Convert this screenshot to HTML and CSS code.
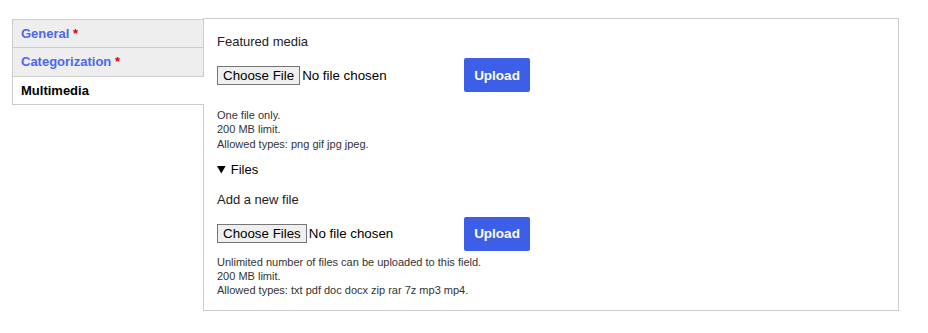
FILE: index.html
```html
<!DOCTYPE html>
<html lang="en">
<head>
  <meta charset="UTF-8">
  <meta name="viewport" content="width=device-width, initial-scale=1.0">
  <title>Multimedia</title>
  <link rel="stylesheet" href="styles.css">
</head>
<body>

  <div class="vertical-tabs">
    <ul class="tabs-menu">
      <li class="tabs-item"><a href="#general">General <span class="req">*</span></a></li>
      <li class="tabs-item"><a href="#categorization">Categorization <span class="req">*</span></a></li>
      <li class="tabs-item is-selected"><a href="#multimedia">Multimedia</a></li>
    </ul>

    <div class="tabs-pane" id="multimedia">
      <div class="field">
        <label class="field-label">Featured media</label>
        <div class="upload-row">
          <input type="file" class="file-input" accept="image/*">
          <button type="button" class="upload-btn">Upload</button>
        </div>
        <div class="field-help first">
          One file only.<br>
          200 MB limit.<br>
          Allowed types: png gif jpg jpeg.
        </div>
      </div>

      <details class="files" open>
        <summary>Files</summary>
        <label class="field-label">Add a new file</label>
        <div class="upload-row second">
          <input type="file" class="file-input" multiple>
          <button type="button" class="upload-btn">Upload</button>
        </div>
        <div class="field-help">
          Unlimited number of files can be uploaded to this field.<br>
          200 MB limit.<br>
          Allowed types: txt pdf doc docx zip rar 7z mp3 mp4.
        </div>
      </details>
    </div>
  </div>

</body>
</html>
```

FILE: styles.css
```css
body {
  margin: 0;
  padding: 18px 29px 0 12px;
  font-family: "Liberation Sans", Arial, sans-serif;
  font-size: 13px;
  line-height: 16px;
  color: #222;
  background: #fff;
}

.vertical-tabs {
  display: flex;
  align-items: flex-start;
}

.tabs-menu {
  width: 192px;
  flex: none;
  margin: 1px -1px 0 0;
  padding: 0;
  list-style: none;
  border-top: 1px solid #ccc;
  position: relative;
  z-index: 1;
}

.tabs-item {
  border: 1px solid #ccc;
  border-top: 0;
  background: #eee;
}
.tabs-item.is-selected {
  border-right: 0;
  background: #fff;
}

.tabs-item a {
  display: block;
  padding: 6px 8px 6.4px;
  line-height: 15px;
  font-weight: bold;
  color: #4b68ef;
  text-decoration: none;
}
.tabs-item.is-selected a {
  color: #000;
}

.req {
  color: #e00000;
}

.tabs-pane {
  flex: 1;
  border: 1px solid #ccc;
  padding: 15px 13px 12px;
  min-width: 0;
}

.field-label {
  display: block;
}

.upload-row {
  display: flex;
  align-items: center;
  margin-top: 8px;
}
.upload-row.second {
  margin-top: 9px;
}

.file-input {
  width: 247px;
  font-family: "Liberation Sans", Arial, sans-serif;
  font-size: 13.33px;
  color: #000;
}
.file-input::file-selector-button {
  font: inherit;
  background: #efefef;
  border: 1px solid #767676;
  border-radius: 0;
  padding: 1px 5px;
  margin-right: 2px;
  color: #000;
}

.upload-btn {
  width: 66px;
  height: 34px;
  border: none;
  border-radius: 2px;
  background: #3d5fe8;
  color: #fff;
  font-family: "Liberation Sans", Arial, sans-serif;
  font-size: 13.5px;
  font-weight: bold;
  cursor: pointer;
}

.field-help {
  font-size: 11px;
  line-height: 14.3px;
  color: #333;
  margin-top: 4px;
}
.field-help.first {
  margin-top: 16px;
}

.files {
  margin-top: 11px;
}
.files summary {
  cursor: pointer;
  color: #000;
  margin-bottom: 14px;
}
```
